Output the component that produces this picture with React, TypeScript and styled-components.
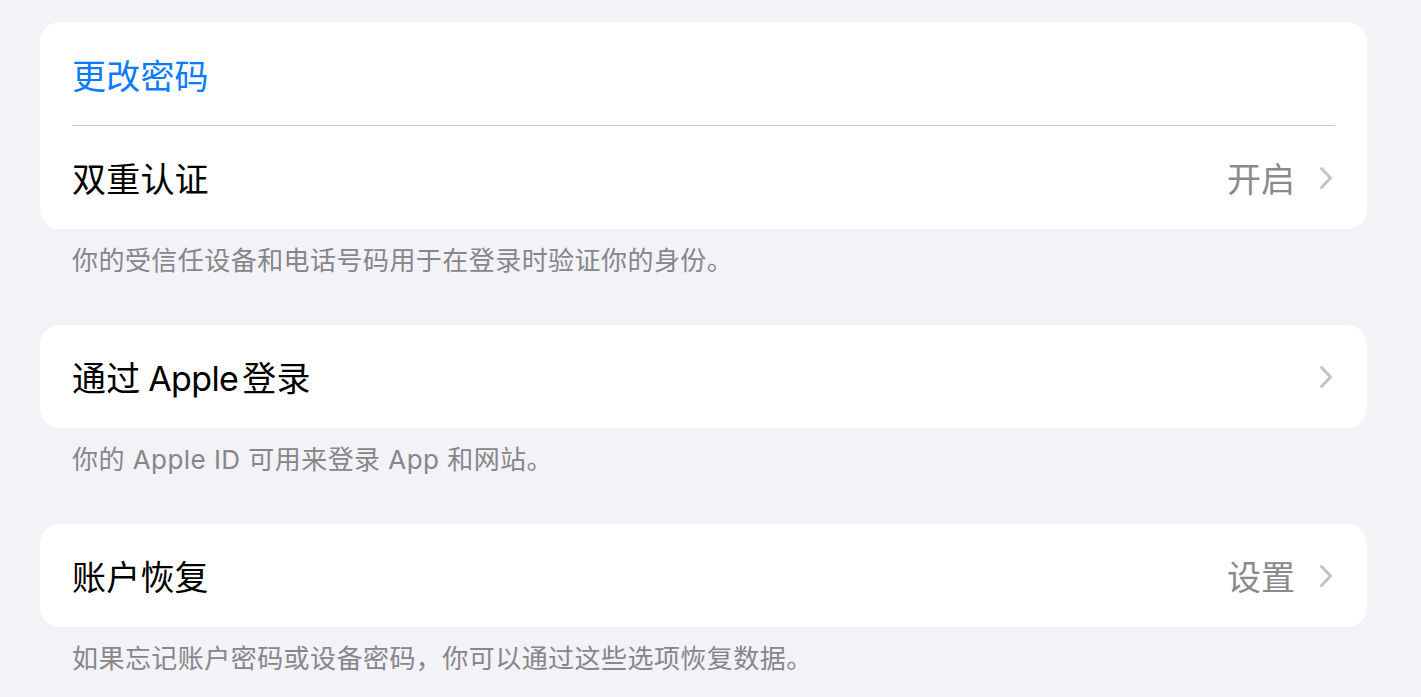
import styled, { createGlobalStyle } from 'styled-components'

const GlobalStyle = createGlobalStyle`
  html, body {
    margin: 0;
    padding: 0;
    background: #f2f2f7;
  }
  body {
    font-family: 'Inter', 'Noto Sans CJK SC', 'Noto Sans', sans-serif;
    -webkit-font-smoothing: antialiased;
  }
`

const Page = styled.div`
  padding: 22px 54px 0 40px;
  min-height: 697px;
  box-sizing: border-box;
`

const Card = styled.div`
  background: #ffffff;
  border-radius: 20px;
  overflow: hidden;
`

const Row = styled.div<{ $divider?: boolean }>`
  height: ${(p) => (p.$divider ? '104px' : '103px')};
  display: flex;
  align-items: center;
  padding: 0 34px 0 32px;
  position: relative;
  box-sizing: border-box;

  ${(p) =>
    p.$divider &&
    `
    &::after {
      content: '';
      position: absolute;
      left: 32px;
      right: 32px;
      bottom: 0;
      height: 1px;
      background: #c6c6c8;
    }
  `}
`

const Label = styled.span<{ $accent?: boolean }>`
  flex: 1;
  font-size: 34px;
  color: ${(p) => (p.$accent ? '#0a7aff' : '#000000')};
  letter-spacing: 0.2px;
`

const Latin = styled.span`
  letter-spacing: -0.6px;
  margin: 0 4px 0 -2px;
`

const Value = styled.span`
  font-size: 34px;
  color: #8a8a8e;
  margin-right: 24px;
`

const Footer = styled.p`
  margin: 0 0 46px;
  padding: 14px 0 0 32px;
  font-size: 26px;
  line-height: 36px;
  letter-spacing: 0.45px;
  color: #86868b;
`

function Chevron() {
  return (
    <svg width="14" height="24" viewBox="0 0 14 24" fill="none">
      <path d="M2.5 2.5 L11.5 12 L2.5 21.5" stroke="#c4c4c7" strokeWidth="3" strokeLinecap="round" strokeLinejoin="round" />
    </svg>
  )
}

export default function App() {
  return (
    <>
      <GlobalStyle />
      <Page>
        <Card>
          <Row $divider>
            <Label $accent>更改密码</Label>
          </Row>
          <Row>
            <Label>双重认证</Label>
            <Value>开启</Value>
            <Chevron />
          </Row>
        </Card>
        <Footer>你的受信任设备和电话号码用于在登录时验证你的身份。</Footer>

        <Card>
          <Row>
            <Label>
              通过 <Latin>Apple</Latin>登录
            </Label>
            <Chevron />
          </Row>
        </Card>
        <Footer>你的 Apple ID 可用来登录 App 和网站。</Footer>

        <Card>
          <Row>
            <Label>账户恢复</Label>
            <Value>设置</Value>
            <Chevron />
          </Row>
        </Card>
        <Footer>如果忘记账户密码或设备密码，你可以通过这些选项恢复数据。</Footer>
      </Page>
    </>
  )
}
